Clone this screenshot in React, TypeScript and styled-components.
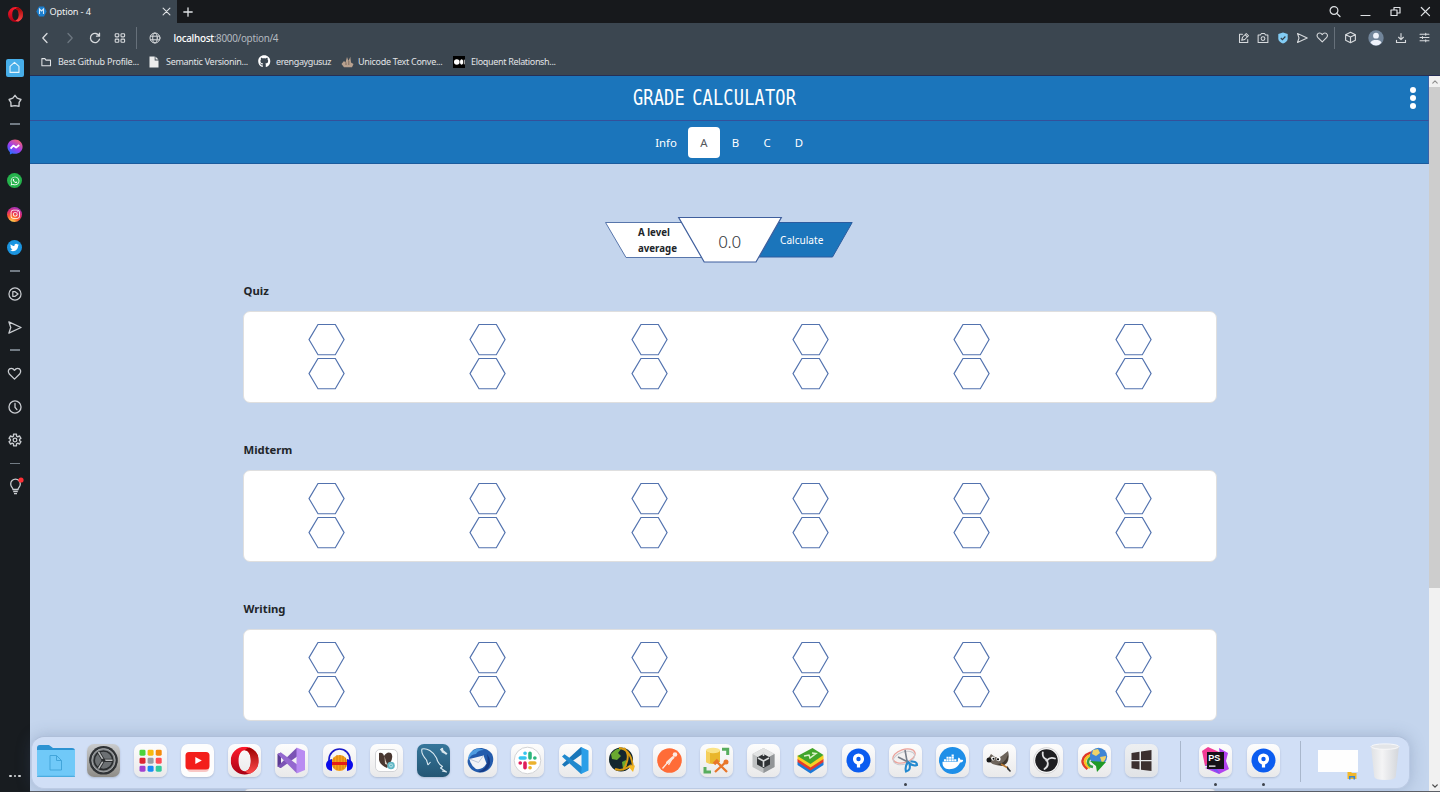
import React from "react";
import styled, { createGlobalStyle, css } from "styled-components";
import {
  FaFacebookMessenger,
  FaWhatsapp,
  FaInstagram,
  FaTwitter,
  FaGithub,
  FaDocker,
} from "react-icons/fa";

const Global = createGlobalStyle`
  * { box-sizing: border-box; }
  html, body { margin: 0; padding: 0; overflow: hidden; }
  body { font-family: "Noto Sans", "Open Sans", sans-serif; background: #181c20; }
  svg { display: block; }
`;

/* ---------- shell ---------- */

const Window = styled.div`
  position: relative;
  display: grid;
  grid-template-columns: 30px 1fr;
  width: 1440px;
  height: 792px;
  overflow: hidden;
`;

const Main = styled.div`
  display: flex;
  flex-direction: column;
  min-width: 0;
  height: 792px;
`;

/* ---------- opera sidebar ---------- */

const Sidebar = styled.aside`
  display: flex;
  flex-direction: column;
  align-items: center;
  height: 792px;
  background: #181c20;
  color: #c9ccd0;
`;

const SideLogo = styled.div`
  display: flex;
  align-items: center;
  justify-content: center;
  height: 50.7px;
  padding-bottom: 21px;
  flex: none;
`;

const SideItem = styled.div`
  display: flex;
  align-items: center;
  justify-content: center;
  width: 29.4px;
  height: 33.7px;
  flex: none;
`;

const SideDash = styled.div`
  width: 10px;
  height: 12px;
  flex: none;
  display: flex;
  align-items: center;
  &::after {
    content: "";
    width: 10px;
    height: 1.4px;
    background: #727b84;
  }
`;

const HomeTile = styled.div`
  display: flex;
  align-items: center;
  justify-content: center;
  width: 18px;
  height: 18px;
  border-radius: 2px;
  background: #47aee9;
`;

const Round = styled.div<{ $bg: string }>`
  display: flex;
  align-items: center;
  justify-content: center;
  width: 15px;
  height: 15px;
  border-radius: 50%;
  color: #fff;
  background: ${(p) => p.$bg};
`;

const SideMore = styled.div`
  display: flex;
  gap: 2px;
  margin-top: auto;
  margin-bottom: 15px;
  i {
    width: 2.5px;
    height: 2.5px;
    border-radius: 50%;
    background: #d5d7da;
  }
`;

/* ---------- browser chrome ---------- */

const TabBar = styled.div`
  display: flex;
  align-items: center;
  height: 23px;
  flex: none;
  background: #17191c;
  color: #dfe2e5;
`;

const Tab = styled.div`
  display: flex;
  align-items: center;
  width: 147px;
  height: 23px;
  padding: 0 6px 0 6px;
  background: #3b4650;
  font-size: 9.2px;
  letter-spacing: -0.15px;
`;

const TabTitle = styled.span`
  flex: 1;
  margin-left: 2.5px;
  color: #f1f3f5;
`;

const NewTab = styled.div`
  margin-left: 6px;
`;

const WindowButtons = styled.div`
  display: flex;
  align-items: center;
  gap: 19px;
  margin-left: auto;
  padding-right: 9px;
`;

const AddressBar = styled.div`
  display: flex;
  align-items: center;
  height: 29px;
  flex: none;
  padding-left: 8px;
  background: #3b4650;
  color: #d7dadd;
`;

const NavButtons = styled.div`
  display: flex;
  align-items: center;
  gap: 11px;
`;

const BarDivider = styled.div<{ $ml: number; $mr: number }>`
  width: 1px;
  height: 22px;
  margin-left: ${(p) => p.$ml}px;
  margin-right: ${(p) => p.$mr}px;
  background: #66707a;
`;

const Url = styled.div`
  margin-left: 13px;
  font-size: 9.9px;
  letter-spacing: -0.28px;
  color: #b4bac0;
  b {
    font-weight: 500;
    color: #ffffff;
  }
`;

const BarActions = styled.div`
  display: flex;
  align-items: center;
  margin-left: auto;
  padding-right: 9px;
`;

const PageActions = styled.div`
  display: flex;
  align-items: center;
  gap: 7.5px;
`;

const ProfileActions = styled.div`
  display: flex;
  align-items: center;
  gap: 11px;
`;

const Bookmarks = styled.div`
  display: flex;
  align-items: center;
  height: 24px;
  flex: none;
  padding: 0 0 4px 10px;
  border-bottom: 1px solid #262f55;
  background: #3b4650;
  color: #e2e4e7;
  font-size: 9px;
`;

const Bookmark = styled.div<{ $w: number; $gap: number; $ls: number }>`
  display: flex;
  align-items: center;
  width: ${(p) => p.$w}px;
  flex: none;
  gap: ${(p) => p.$gap}px;
  letter-spacing: ${(p) => p.$ls}px;
  white-space: nowrap;
`;

/* ---------- page ---------- */

const Viewport = styled.div`
  display: flex;
  flex: 1;
  min-height: 0;
  border-bottom: 1px solid #5c5f66;
`;

const Page = styled.div`
  flex: 1;
  min-width: 0;
  overflow: hidden;
  background: #c4d5ed;
`;

const Header = styled.header`
  display: grid;
  grid-template-columns: 1fr auto 1fr;
  align-items: center;
  height: 45px;
  border-bottom: 1px solid #34509a;
  border-right: 1px solid #3a62a8;
  background: #1b75bb;
`;

const Brand = styled.h1`
  grid-column: 2;
  margin: 0 29px 1px 0;
  color: #fff;
  font-family: "DejaVu Sans Mono", monospace;
  font-weight: 400;
  font-size: 17px;
  line-height: 20px;
  letter-spacing: 0.15px;
  word-spacing: -3px;
  transform: scaleY(1.2);
`;

const Kebab = styled.button`
  display: flex;
  flex-direction: column;
  align-items: center;
  gap: 1.8px;
  justify-self: end;
  margin: 0 12px 0 0;
  padding: 0;
  border: 0;
  background: none;
  i {
    width: 6.4px;
    height: 6.4px;
    border-radius: 50%;
    background: #fff;
  }
`;

const NavBar = styled.nav`
  display: flex;
  justify-content: center;
  align-items: center;
  height: 43px;
  border-bottom: 1px solid #1a5b9d;
  border-right: 1px solid #3a62a8;
  background: #1b75bb;
`;

const NavLink = styled.a<{ $active?: boolean; $w: number }>`
  display: flex;
  align-items: center;
  justify-content: center;
  width: ${(p) => p.$w}px;
  height: 31px;
  padding: 1px 0 0 1px;
  border-radius: 4px;
  font-size: 11.4px;
  color: #fff;
  ${(p) =>
    p.$active &&
    css`
      background: #fff;
      color: #55585c;
    `}
`;

const Content = styled.main`
  width: 974px;
  margin: 0 0 0 213px;
  padding-top: 53px;
`;

const Calc = styled.div`
  display: flex;
  align-items: center;
  height: 46px;
  margin-bottom: 18px;
  padding-left: 362px;
`;

const Shape = styled.div<{ $w: number; $h: number; $ml?: number; $z?: number }>`
  position: relative;
  z-index: ${(p) => p.$z ?? 0};
  display: flex;
  align-items: center;
  width: ${(p) => p.$w}px;
  height: ${(p) => p.$h}px;
  margin-left: ${(p) => p.$ml ?? 0}px;
  flex: none;
  > svg {
    position: absolute;
    inset: 0;
    z-index: -1;
    overflow: visible;
  }
`;

const AverageLabel = styled.span`
  margin-left: 33px;
  padding-top: 1px;
  font-weight: 700;
  font-size: 9.7px;
  line-height: 16px;
  color: #212529;
`;

const AverageValue = styled.span`
  width: 100%;
  padding: 3px 1px 0 0;
  text-align: center;
  font-size: 17px;
  font-weight: 300;
  letter-spacing: -0.3px;
  color: #33373b;
`;

const CalculateText = styled.span`
  margin-left: 23px;
  font-size: 10.1px;
  color: #fff;
`;

const Section = styled.section`
  height: 159px;
`;

const SectionTitle = styled.h2`
  margin: 0 0 10px 0.5px;
  padding-top: 1px;
  height: 20px;
  line-height: 18px;
  font-size: 11.3px;
  font-weight: 700;
  color: #212529;
`;

const Card = styled.div`
  display: flex;
  height: 92px;
  padding: 12px 2px 0 1.5px;
  border: 1px solid #dfdfdf;
  border-radius: 7px;
  background: #fff;
`;

const Column = styled.div`
  display: flex;
  flex-direction: column;
  align-items: center;
  gap: 2px;
  flex: 1;
`;

const Scrollbar = styled.div`
  display: flex;
  flex-direction: column;
  width: 11px;
  flex: none;
  background: #f1f1f1;
`;

const ScrollArrow = styled.div`
  display: flex;
  align-items: center;
  justify-content: center;
  height: 11px;
`;

const ScrollThumb = styled.div`
  height: 501px;
  margin-bottom: auto;
  background: #cdcdcd;
`;

/* ---------- dock ---------- */

const DockBar = styled.div`
  position: absolute;
  left: 31px;
  top: 736px;
  display: flex;
  width: 1379px;
  height: 53px;
  padding-left: 0.4px;
  border-radius: 13px;
  border: 1px solid #bccbe4;
  border-top-color: #afbfd9;
  background: #d1dff6;
  box-shadow: 0 0 16px rgba(70, 90, 130, 0.28);
`;

const DockCell = styled.div`
  display: flex;
  flex-direction: column;
  align-items: center;
  width: 47.2px;
  flex: none;
  padding-top: 7px;
`;

const Tile = styled.div<{ $bg?: string }>`
  width: 33px;
  height: 33px;
  border-radius: 7px;
  overflow: hidden;
  background: ${(p) => p.$bg ?? "linear-gradient(#fdfdfd, #e9e9ea)"};
  box-shadow: 0 1px 2px rgba(60, 70, 90, 0.22);
`;

const RunDot = styled.i`
  width: 3px;
  height: 3px;
  margin-top: 6px;
  border-radius: 50%;
  background: #3d434c;
`;

const DockRule = styled.div<{ $ml: number; $mr: number }>`
  width: 1px;
  height: 41px;
  margin: 4px ${(p) => p.$mr}px 0 ${(p) => p.$ml}px;
  background: #a9b7cc;
`;

const Thumb = styled.div`
  position: relative;
  width: 40px;
  height: 22px;
  margin: 13px 12px 0 0;
  background: #fefefe;
  svg {
    position: absolute;
    right: 1px;
    bottom: -8px;
  }
`;

const Trash = styled.div`
  margin-top: 6px;
`;

/* ---------- small line icons ---------- */

type IconProps = { w: number; h?: number; box?: string; sw?: number; color?: string; children: React.ReactNode };

const Line = ({ w, h, box = "0 0 16 16", sw = 1.4, color = "currentColor", children }: IconProps) => (
  <svg width={w} height={h ?? w} viewBox={box} fill="none" stroke={color} strokeWidth={sw} strokeLinecap="round" strokeLinejoin="round">
    {children}
  </svg>
);

const OperaMark = ({ size }: { size: number }) => (
  <svg width={size} height={size} viewBox="0 0 32 32">
    <defs>
      <linearGradient id="opl" x1="0" y1="0" x2="0" y2="1">
        <stop offset="0" stopColor="#ff1b2d" />
        <stop offset="1" stopColor="#a70014" />
      </linearGradient>
      <linearGradient id="opr" x1="0" y1="0" x2="0" y2="1">
        <stop offset="0" stopColor="#9c0000" />
        <stop offset="1" stopColor="#ff4b4b" />
      </linearGradient>
    </defs>
    <path fillRule="evenodd" fill="url(#opl)" d="M16 0a16 16 0 1 0 0 32a16 16 0 0 0 0-32ZM16 4c4.300 0 7 5 7 12s-2.700 12-7 12s-7-5-7-12s2.700-12 7-12Z" />
    <path fill="url(#opr)" d="M16 4q3-3 6-2.800A16 16 0 0 1 22 30.800Q19 31 16 28c4.300 0 7-5 7-12s-2.700-12-7-12Z" />
  </svg>
);

const Heart = () => <path d="M8 14 2.500 8.600C.3 6 1.600 2.500 4.600 2.500 6.300 2.500 7.300 3.500 8 4.600 8.700 3.500 9.700 2.500 11.400 2.500c3 0 4.300 3.500 2.100 6.100Z" />;
const Plane = () => <path d="M2 2 15 8 2 14 4 8Z" />;

const SidebarView = () => (
  <Sidebar>
    <SideLogo><OperaMark size={15} /></SideLogo>
    <SideItem>
      <HomeTile>
        <Line w={13} color="#e6f5fd" sw={1.300}><path d="M2.500 6.600 8 1.700l5.500 4.900V14h-11Z" /></Line>
      </HomeTile>
    </SideItem>
    <SideItem>
      <Line w={14} sw={1.600}><path d="M8 1.500 10.500 4.800 14.800 6.300 12.700 9.700 12.600 14 8 13.300 3.400 14 3.300 9.700 1.200 6.300 5.500 4.800Z" /></Line>
    </SideItem>
    <SideDash />
    <SideItem>
      <svg width="16" height="16" viewBox="0 0 16 16">
        <defs>
          <linearGradient id="ms" x1="0.200" y1="1" x2="0.800" y2="0">
            <stop offset="0" stopColor="#1778ff" />
            <stop offset=".45" stopColor="#9a3cf2" />
            <stop offset="1" stopColor="#ff6566" />
          </linearGradient>
        </defs>
        <path fill="url(#ms)" d="M8 .4C3.600.4.4 3.500.4 7.700c0 2.200 1 4.100 2.500 5.500v2.400l2.400-1.200c.9.200 1.700.4 2.700.4 4.400 0 7.600-3.100 7.600-7.100S12.400.4 8 .4Z" />
        <path fill="none" stroke="#fff" strokeWidth="1.800" strokeLinejoin="round" d="m3.600 9.600 2.700-3 2.800 2L12.200 6" />
      </svg>
    </SideItem>
    <SideItem><Round $bg="#25b34c"><FaWhatsapp size={10} /></Round></SideItem>
    <SideItem>
      <Round $bg="radial-gradient(circle at 30% 105%, #ffd050 8%, #fb5a2d 38%, #dc2c73 62%, #8a38d8 95%)"><FaInstagram size={10.500} /></Round>
    </SideItem>
    <SideItem><Round $bg="#1b95e0"><FaTwitter size={9} /></Round></SideItem>
    <SideDash />
    <SideItem><Line w={14} sw={1.400}><circle cx="8" cy="8" r="6.900" /><path d="M5.500 5.200h2.300L11.500 8 7.800 10.800H5.500Z" /></Line></SideItem>
    <SideItem><Line w={15} sw={1.400}><Plane /></Line></SideItem>
    <SideDash />
    <SideItem><Line w={15} sw={1.400}><Heart /></Line></SideItem>
    <SideItem><Line w={14} sw={1.500}><circle cx="8" cy="8" r="6.900" /><path d="M8 4v4.300L10.200 11" /></Line></SideItem>
    <SideItem>
      <Line w={14} sw={1.500}>
        <circle cx="8" cy="8" r="2.100" />
        <path d="M6.300 1.300h3.400v2.200l1.500.9 1.900-1.100 1.700 2.900-1.600 1v1.600l1.600 1-1.700 2.900-1.900-1.100-1.500.9v2.200H6.300v-2.200l-1.500-.9-1.900 1.100L1.200 9.800l1.600-1V7.200l-1.600-1 1.700-2.900 1.900 1.100 1.500-.9Z" />
      </Line>
    </SideItem>
    <SideDash />
    <SideItem>
      <svg width="18" height="18" viewBox="0 0 18 18" fill="none" stroke="currentColor" strokeWidth="1.300">
        <path d="M7 12.500C7 11 4.700 10 4.700 6.900a4.800 4.800 0 0 1 9.600 0c0 3.100-2.300 4.100-2.300 5.600ZM7.200 14.500h4.600M8 16.600h3" />
        <circle cx="15" cy="3" r="2.600" fill="#ff2f35" stroke="none" />
      </svg>
    </SideItem>
    <SideMore><i /><i /><i /></SideMore>
  </Sidebar>
);

const ChromeView = () => (
  <>
    <TabBar>
      <Tab>
        <svg width="11" height="11" viewBox="0 0 11 11">
          <path fill="#1b7fd0" d="M3 .5h5L10.700 5.500 8 10.500H3L.3 5.500Z" />
          <path fill="none" stroke="#d4e8f8" strokeWidth="1.100" d="M3.500 8V3l2 2 2-2v5" />
        </svg>
        <TabTitle>Option - 4</TabTitle>
        <Line w={9} box="0 0 10 10" sw={1.200}><path d="m1.200 1.200 7.600 7.600M8.800 1.200 1.200 8.800" /></Line>
      </Tab>
      <NewTab><Line w={10} box="0 0 10 10" sw={1.300}><path d="M5 .8v8.400M.8 5h8.400" /></Line></NewTab>
      <WindowButtons>
        <Line w={12} box="0 0 12 12" sw={1.200}><circle cx="5" cy="4.500" r="3.900" /><path d="m7.800 7.300 3.200 3.200" /></Line>
        <Line w={11} box="0 0 11 11" sw={1.200}><path d="M1 9.500h9" /></Line>
        <Line w={11} box="0 0 11 11" sw={1.200}><path d="M1 4h6v5.500H1ZM4 4V1.500h6V7H7" /></Line>
        <Line w={11} box="0 0 11 11" sw={1.200}><path d="m1.300 1.500 8.200 8.200M9.500 1.500 1.300 9.700" /></Line>
      </WindowButtons>
    </TabBar>
    <AddressBar>
      <NavButtons>
        <Line w={14} box="0 0 14 14" sw={1.300}><path d="M9 2.500 4.800 7 9 11.500" /></Line>
        <Line w={14} box="0 0 14 14" sw={1.300} color="#6d7780"><path d="m5 2.500 4.200 4.500L5 11.500" /></Line>
        <Line w={14} box="0 0 14 14" sw={1.300}><path d="M11.200 5A4.600 4.600 0 1 0 11.500 8.200M11.500 2.200v3H8.500" /></Line>
        <Line w={14} box="0 0 14 14" sw={1.100}>
          <rect x="2.200" y="2.700" width="3.600" height="3.200" rx=".8" /><rect x="8" y="2.700" width="3.600" height="3.200" rx=".8" />
          <rect x="2.200" y="8.100" width="3.600" height="3.200" rx=".8" /><rect x="8" y="8.100" width="3.600" height="3.200" rx=".8" />
        </Line>
      </NavButtons>
      <BarDivider $ml={9} $mr={11.500} />
      <Line w={12} box="0 0 12 12" sw={1}><circle cx="6" cy="6" r="5" /><ellipse cx="6" cy="6" rx="2.300" ry="5" /><path d="M1.500 4.200h9M1.500 7.800h9" /></Line>
      <Url><b>localhost</b>:8000/option/4</Url>
      <BarActions>
        <PageActions>
          <Line w={12} sw={1.400}><path d="M6 3H2v11h11v-4M5 11l1-4 5-5 3 3-5 5ZM9.500 3.500l3 3" /></Line>
          <Line w={12} sw={1.400}><path d="M1.500 4h3L6 2h4l1.500 2h3v10h-13Z" /><circle cx="8" cy="8.800" r="2.500" /></Line>
          <svg width="12" height="12" viewBox="0 0 12 12"><path fill="#83cdf5" d="M6 .5 10.700 2v4.500c0 2.500-2 4-4.700 5-2.700-1-4.700-2.500-4.700-5V2Z" /><path d="m3.800 6 1.600 1.600L8.400 4.500" fill="none" stroke="#32404b" strokeWidth="1.200" /></svg>
          <Line w={12} sw={1.400}><Plane /></Line>
          <Line w={12.500} sw={1.400}><Heart /></Line>
        </PageActions>
        <BarDivider $ml={6} $mr={9} />
        <ProfileActions>
          <Line w={13} sw={1.400}><path d="M8 1.500 14 4.500v7L8 14.500 2 11.500v-7ZM2 4.500l6 3 6-3M8 7.500v7" /></Line>
          <svg width="16" height="16" viewBox="0 0 16 16"><circle cx="8" cy="8" r="7.700" fill="#71859a" /><circle cx="8" cy="5.700" r="2.900" fill="#eef2fa" /><path fill="#eef2fa" d="M2.500 12.700C3.500 10.500 5.500 10 8 10s4.500.5 5.500 2.700A7.500 7.500 0 0 1 8 15.500a7.500 7.500 0 0 1-5.500-2.800Z" /></svg>
          <Line w={12} sw={1.500}><path d="M8 2v8M4.800 7 8 10.200 11.200 7M2 11v3h12v-3" /></Line>
          <Line w={13} sw={1.300}><path d="M2.500 4h11M2.500 8h11M2.500 12h11M9.500 2.800v2.400M5.500 6.800v2.400M9.500 10.800v2.400" /></Line>
        </ProfileActions>
      </BarActions>
    </AddressBar>
    <Bookmarks>
      <Bookmark $w={108.500} $gap={6} $ls={-0.250}>
        <Line w={12} sw={1.400}><path d="M2.500 3.500h4l1.500 2h6v7.500h-11.500Z" /></Line>Best Github Profile...
      </Bookmark>
      <Bookmark $w={109.500} $gap={7.500} $ls={-0.290}>
        <svg width="10" height="12" viewBox="0 0 10 12"><path fill="#eceded" d="M.5.5h5.200v4h3.800v7H.5ZM6.500.5l3 3h-3Z" /></svg>Semantic Versionin...
      </Bookmark>
      <Bookmark $w={82.500} $gap={5.500} $ls={-0.380}><FaGithub size={12.500} color="#fff" />erengaygusuz</Bookmark>
      <Bookmark $w={112.500} $gap={4.500} $ls={-0.290}>
        <svg width="13" height="12" viewBox="0 0 13 12"><path fill="#b8a18f" d="M.5 8 3 5l1.500 1.500L6 1l1.500 4L9.300.8l.7 5.700 2.500 1.500L11 11.300H3Z" /><path stroke="#625248" strokeWidth=".7" d="M5 6.500v2.500M7.800 5v4" /></svg>Unicode Text Conve...
      </Bookmark>
      <Bookmark $w={110} $gap={6} $ls={-0.330}>
        <svg width="12" height="12" viewBox="0 0 12 12"><path d="M0 0h12v12H0Z" /><circle cx="3.800" cy="6" r="2.800" fill="#fff" /><ellipse cx="8.600" cy="6" rx="1.600" ry="2.700" fill="#fff" /><path stroke="#fff" strokeWidth=".8" d="M11.300 3.700v4.600" /></svg>Eloquent Relationsh...
      </Bookmark>
    </Bookmarks>
  </>
);

/* ---------- grade calculator ---------- */

const Hexagon = () => (
  <svg width="37" height="32" viewBox="0 0.400 37 32">
    <path d="M10 .9h17.300L36.100 16 27.300 31.100H10L1 16Z" fill="#fff" stroke="#5272ae" strokeWidth="1.150" />
  </svg>
);

const ScoreCard = () => (
  <Card>
    {[0, 1, 2, 3, 4, 5].map((i) => (
      <Column key={i}><Hexagon /><Hexagon /></Column>
    ))}
  </Card>
);

const PageView = () => (
  <Page>
    <Header>
      <Brand>GRADE CALCULATOR</Brand>
      <Kebab aria-label="Menu"><i /><i /><i /></Kebab>
    </Header>
    <NavBar>
      <NavLink $w={44}>Info</NavLink>
      <NavLink $w={32} $active>A</NavLink>
      <NavLink $w={31}>B</NavLink>
      <NavLink $w={32}>C</NavLink>
      <NavLink $w={32}>D</NavLink>
    </NavBar>
    <Content>
      <Calc>
        <Shape $w={100} $h={36}>
          <svg width="100" height="36"><path d="M.5.5H99V35.500H21Z" fill="#fff" stroke="#5876ab" /></svg>
          <AverageLabel>A level<br />average</AverageLabel>
        </Shape>
        <Shape $w={104} $h={46} $ml={-27} $z={2}>
          <svg width="104" height="46"><path d="M.7.500H103.300L78 45H26.200Z" fill="#fff" stroke="#3f5f9d" strokeWidth="1.200" /></svg>
          <AverageValue>0.0</AverageValue>
        </Shape>
        <Shape $w={96} $h={36} $ml={-25} $z={1}>
          <svg width="96" height="36"><path d="M1 .5H95.200L75.500 35H1Z" fill="#1b75bb" stroke="#2c5c9f" /></svg>
          <CalculateText>Calculate</CalculateText>
        </Shape>
      </Calc>
      {["Quiz", "Midterm", "Writing"].map((t) => (
        <Section key={t}>
          <SectionTitle>{t}</SectionTitle>
          <ScoreCard />
        </Section>
      ))}
      <Section>
        <SectionTitle />
        <ScoreCard />
      </Section>
    </Content>
  </Page>
);

/* ---------- dock icons, drawn on a 33px square ---------- */

const Art = ({ children }: { children: React.ReactNode }) => (
  <svg width="33" height="33" viewBox="0 0 33 33">{children}</svg>
);

const Folder = () => (
  <svg width="40" height="34" viewBox="0 0 40 34">
    <path fill="#2d93d2" d="M1 4q0-3 3-3h9l4 3h19q3 0 3 3v6H1Z" />
    <path fill="#70c9f8" d="M1 6h38v24q0 3-3 3H4q-3 0-3-3Z" />
    <path fill="none" stroke="#42a5da" d="M14 11.500h6.500l5 5V26H14ZM20.500 11.500v5h5M1 32.300h38" />
  </svg>
);

const Sourcetree = () => (
  <Art>
    <circle cx="16.500" cy="16.500" r="12" fill="#0b5cf0" />
    <circle cx="16.500" cy="15" r="3.900" fill="none" stroke="#fff" strokeWidth="3.400" />
    <path stroke="#fff" strokeWidth="3.200" d="M16.500 19v4.500" />
  </Art>
);

const colors = ["#4bd33b", "#f6b90e", "#f58a0a", "#dd2631", "#989da6", "#ff4b54", "#a240d0", "#178cf4", "#34ca9c"];

type App = { id: string; bg?: string; run?: boolean; art: React.ReactNode };

const apps: App[] = [
  {
    id: "settings",
    bg: "linear-gradient(#c9cbcd, #8e8c87)",
    art: (
      <Art>
        <circle cx="16.500" cy="16.300" r="14.300" fill="#2f3235" />
        <circle cx="16.500" cy="16.300" r="11.700" fill="#808487" stroke="#a9abad" strokeWidth=".9" />
        <circle cx="16.500" cy="16.300" r="9.300" fill="#6c7073" stroke="#2a2d2f" strokeWidth="1.700" />
        <path d="M16.500 16.300 11.500 8M16.500 16.300h9M16.500 16.300 11.500 24.600" fill="none" stroke="#2a2d2f" strokeWidth="3.200" />
        <path d="M16.500 16.300 11.500 8M16.500 16.300h9M16.500 16.300 11.500 24.600" fill="none" stroke="#b9bbbc" strokeWidth="1.500" />
        <circle cx="16.500" cy="16.300" r="1.800" fill="#2b2e30" />
      </Art>
    ),
  },
  {
    id: "launchpad",
    art: <Art>{colors.map((c, i) => <rect key={c} x={5.500 + (i % 3) * 8.100} y={5.700 + Math.floor(i / 3) * 8} width="6" height="6" rx="1.400" fill={c} />)}</Art>,
  },
  {
    id: "youtube",
    bg: "#fdfdfd",
    art: <Art><rect x="6" y="11" width="22" height="17" rx="4" fill="#f6a4a0" opacity=".6" /><rect x="4.500" y="8" width="24" height="17.500" rx="3.500" fill="#f31e1b" /><path fill="#fff" d="m14.300 13 6.500 3.500L14.300 20Z" /></Art>,
  },
  { id: "opera", art: <Art><g transform="translate(2.700 2.700)"><OperaMark size={28} /></g></Art> },
  {
    id: "visual-studio",
    art: (
      <Art>
        <path fill="#5b3b92" d="M2.500 10 6 8.500v15.500l-3.500-1.500Z" />
        <path fill="#7b53b5" d="m2.500 22.500 3.500 1.500L23.500 11.500V5.500L21.500 4Z" />
        <path fill="#9468cf" d="M2.500 10 6 8.500l17.500 13v6L21.500 29Z" />
        <path fill="#b98cf2" d="m21.500 3.500 8.500 3.500v19l-8.500 3.500Z" />
      </Art>
    ),
  },
  {
    id: "audacity",
    art: (
      <Art>
        <circle cx="16.500" cy="19" r="8" fill="#f7a11a" />
        <path fill="none" stroke="#c9720c" strokeWidth=".7" d="M11 14v10M14 11v15M17 11v15M20 12v13M22.500 14v9" />
        <path stroke="#e71c16" strokeWidth="3" d="M9 19.500h15" />
        <path fill="none" stroke="#1a1ac8" strokeWidth="1.700" d="M6 18V15.500a10.500 10.500 0 0 1 21 0V18" />
        <path fill="#0b0bea" d="M9 15v12Q3 26 3 21t6-6ZM24 15v12q6-1 6-6t-6-6Z" />
      </Art>
    ),
  },
  {
    id: "dbeaver",
    art: (
      <Art>
        <rect x="5.500" y="5.500" width="22" height="22" rx="4.500" fill="#fff" stroke="#d2d3d6" />
        <path fill="#493730" d="M9 9q4-1 5 3 3-5 7-3 3 4-1 10l-3 5q-7-3-8-8Z" />
        <path fill="#d8ccc3" d="M14.500 12q1.500 7 3.500 9l-3-1Z" />
        <circle cx="21" cy="21.500" r="3.800" fill="#62b7c5" /><circle cx="21" cy="21.500" r="1.500" fill="none" stroke="#d9f2f4" strokeWidth=".7" />
      </Art>
    ),
  },
  {
    id: "mysql",
    bg: "linear-gradient(#36769b, #245674)",
    art: (
      <Art>
        <path fill="none" stroke="#d9e8f0" strokeWidth="1.100" strokeLinejoin="round" d="M11 21 9.500 16C6 12 4 8 5 5c5-1 11 2 14.500 9 1 4 3 7 6 8.500l-2 1.500 6 4-4.500-1M11 21l2.500-3" />
        <path fill="none" stroke="#d8e6ed" strokeWidth="2" d="m25 4 .5 3.500L30 10M23.500 5l6 5" />
      </Art>
    ),
  },
  {
    id: "thunderbird",
    art: (
      <Art>
        <path fill="#245cad" d="M9 6C15 2 24 4 28 10c4 8-2 18-11 18.500C8 29 2 21 4 15q2-5 5-9Z" />
        <path fill="#4f9ce0" d="M7 8q7-6 13-2-6 0-8 4Q7 10 4 16q0-5 3-8Z" />
        <path fill="#163a84" d="M23 10q5 6 2 13-4 6-11 5 12-4 9-18Z" />
        <path fill="#f2f3f7" d="m5.500 15 14-3.500 3 8Q19 26 12 25Q7 22 5.500 15Z" /><path fill="none" stroke="#bcc6db" d="m5.500 15 9 3.500 5-7" />
      </Art>
    ),
  },
  {
    id: "slack",
    art: (
      <Art>
        <circle cx="16.500" cy="16.500" r="13.300" fill="#fff" stroke="#d1d2d4" />
        <g strokeWidth="3.600" strokeLinecap="round" fill="none">
          <path stroke="#36c5f0" d="M14 9.200h.1M9.300 14H14" /><path stroke="#2eb67d" d="M19 9.200V14M23.800 14h.1" />
          <path stroke="#e01e5a" d="M14 23.800V19M9.200 19h.1" /><path stroke="#ecb22e" d="M19 23.800h.1M19 19h4.800" />
        </g>
      </Art>
    ),
  },
  {
    id: "vscode",
    art: (
      <Art>
        <path fill="#1976b9" d="m3 20.500 2.500 2.300L24 9.500v-5L22 3Z" />
        <path fill="#2089ce" d="m3 12.500 2.500-2.300L24 23.500v5L22 30Z" />
        <path fill="#2b9fe8" d="m22 3 7.500 3.500v20L22 30l.5-4.500v-18Z" />
      </Art>
    ),
  },
  {
    id: "globe-arrow",
    art: (
      <Art>
        <circle cx="15" cy="15.500" r="12" fill="#13272e" />
        <path fill="#69a930" d="M5 10q5-6 10-5l-3 4 3 3-4 4-5-1ZM16 18l4-2 1 6-4 3Z" />
        <path fill="none" stroke="#d89b13" strokeWidth="1.900" d="M13 4Q25 5 27 23M18 4Q26 12 17 26M9 25q8 3 16-4" />
        <path fill="#f4b823" d="m22 22 7-.5-2 6.500Z" />
      </Art>
    ),
  },
  {
    id: "postman",
    art: (
      <Art>
        <circle cx="16.500" cy="16.500" r="12.300" fill="#ff6c37" />
        <circle cx="22" cy="10.500" r="2.300" fill="#fde9e1" />
        <path fill="none" stroke="#fbe6dc" strokeWidth="2.800" strokeLinecap="round" d="m20 13.500-5.500 5" />
        <path fill="none" stroke="#fbe6dc" strokeWidth="1.300" d="m15 18-5.500 6.500M18.500 16l-3 5" />
      </Art>
    ),
  },
  {
    id: "db-tools",
    art: (
      <Art>
        <path fill="#e9b62b" d="M6 6v12q7 4 14 0V6Z" /><ellipse cx="13" cy="6.500" rx="7" ry="2.700" fill="#fae387" /><path fill="#f5cf5a" d="M6 7v11q2 1.500 4 1.800V9Z" />
        <path fill="none" stroke="#58ad5e" strokeWidth="3" d="M22 5.300h5.700V11M5 23v5h6" />
        <path stroke="#e8762a" strokeWidth="2.300" d="m15 28 12-11M16 17l11 11" /><path stroke="#e8762a" strokeWidth="3.300" d="m14 20 4-4" /><circle cx="26" cy="18" r="2.500" fill="#e8762a" />
      </Art>
    ),
  },
  {
    id: "unity",
    art: (
      <Art>
        <path fill="#bfc1c2" d="m16.500 4 11 6v13l-11 6-11-6V10Z" /><path fill="#e2e3e3" d="m5.500 10 11-6 11 6-11 6Z" /><path fill="#929597" d="M16.500 16v13l11-6V10Z" />
        <path fill="#2e3133" d="m16.500 10 6.500 3.500v7L16.500 24 10 20.500v-7Z" /><path fill="none" stroke="#d7d9d9" strokeWidth="1.600" d="M16.500 17v6M16.500 17 11 14M16.500 17l5.500-3M16.500 8v4" />
      </Art>
    ),
  },
  {
    id: "bluestacks",
    art: (
      <Art>
        <path fill="#1d79d8" d="m3.500 21 13 8.500 13-8.500v-3h-26Z" /><path fill="#e43b2c" d="m3.500 18 13 8.500L29.500 18v-3h-26Z" /><path fill="#f6cf23" d="m3.500 15 13 8.500L29.500 15v-3.500h-26Z" />
        <path fill="#42a52b" d="m3.500 12 15-8 11 7-13 9Z" /><path fill="none" stroke="#dbf2c8" strokeWidth="1.500" d="m10 12 5-1 1 3 6-4.500-4-.5" />
      </Art>
    ),
  },
  { id: "sourcetree", art: <Sourcetree /> },
  {
    id: "snipping",
    run: true,
    art: (
      <Art>
        <ellipse cx="15" cy="12" rx="11.500" ry="6.500" fill="#f3f1f1" stroke="#eba29b" strokeWidth="1.300" transform="rotate(-18 15 12)" />
        <ellipse cx="15" cy="14" rx="11" ry="6" fill="none" stroke="#c8c9ce" transform="rotate(-18 15 14)" />
        <path stroke="#777e89" strokeWidth="1.600" d="m16 6 2.500 14M9 13l12 6" />
        <path fill="none" stroke="#2389cf" strokeWidth="2.100" d="M18.700 18.500q-3 4-1.700 9 5.500-1 3.200-8.500 3.800 3.500 7.800 2 0-4-6.500-3.500" />
      </Art>
    ),
  },
  { id: "docker", art: <Art><circle cx="16.500" cy="16.500" r="13.500" fill="#1f8fe8" /><g transform="translate(6.300 7.300)"><FaDocker size={21} color="#fff" /></g></Art> },
  {
    id: "gimp",
    art: (
      <Art>
        <path fill="#6d645b" d="M5 15 8 10l4 3q5 1 8-2l5-4q2 7-1 12-4 4-11 2-6-1-8-6Z" /><path fill="#40382f" d="M14 20q8 0 11-9 1 9-6 11Z" />
        <circle cx="10" cy="14.500" r="2" fill="#fff" /><circle cx="15.500" cy="15" r="2.200" fill="#fff" /><circle cx="10.500" cy="14.800" r="1" /><circle cx="15" cy="15.300" r="1.100" /><circle cx="6" cy="16" r="2.500" fill="#171717" />
        <path stroke="#b77832" strokeWidth="1.500" d="m18 20 7 4" /><path fill="#333" d="m24 22 4 5-1 1-3-3Z" />
      </Art>
    ),
  },
  {
    id: "obs",
    art: (
      <Art>
        <circle cx="16.500" cy="16.500" r="13.200" fill="#d3d3d5" /><circle cx="16.500" cy="16.500" r="12.200" fill="#fff" /><circle cx="16.500" cy="16.500" r="11.300" fill="#1f1f22" />
        <path fill="none" stroke="#dedee0" strokeWidth="1.800" strokeLinecap="round" d="M12.800 8.500Q12 14 17 15.500M25 14.500Q20 12.500 17 16.500M14.500 25Q19.500 22 17 16.500" />
        <circle cx="16.700" cy="16.200" r="1.300" fill="#dedee0" />
      </Art>
    ),
  },
  {
    id: "idm",
    art: (
      <Art>
        <path fill="none" stroke="#df382b" strokeWidth="2.500" d="M17 8Q6 9 4.500 17q0 4 5 8" /><path fill="none" stroke="#f7c322" strokeWidth="2.500" d="M18 10Q8 11 7 17q0 4 5 7" /><path fill="none" stroke="#359f48" strokeWidth="2.500" d="M18 13q-8 0-8 5 0 4 5 5" />
        <circle cx="20.500" cy="12.500" r="8.700" fill="#3f85d4" /><path fill="#f0d267" d="m15 6 5-1 2 4-4 3-4-2ZM22 13l6-1q0 4-4 7Z" />
        <path fill="#1f9a26" d="m12 17 16 1-9 10-1-6Z" />
      </Art>
    ),
  },
  { id: "windows", bg: "linear-gradient(#edeff1, #e1e3e6)", art: <Art><path fill="#3c302f" d="m6.500 9 8-1.200v8.200h-8ZM16 7.500l10.500-1.500v10H16ZM6.500 17.300h8v8.200l-8-1.300ZM16 17.300h10.500V27L16 25.700Z" /></Art> },
];

const PhpStorm = () => (
  <Art>
    <path fill="#f03c97" d="m3 7 6-4 11 5-3 14L6 22Z" /><path fill="#b242ef" d="m20 4 9 5-2 8 3 8-10 5L6 24l16-6Z" /><path fill="#7556f0" d="m6 21 8-2 7 11Z" />
    <rect x="8" y="8" width="17" height="17" fill="#151117" />
    <text x="9.300" y="17" fill="#fff" fontFamily="Liberation Sans, sans-serif" fontWeight="700" fontSize="9">PS</text>
    <path fill="#fff" d="M10 21.500h6.500v1.300H10Z" />
  </Art>
);

const DockView = () => (
  <DockBar>
    <DockCell><Folder /></DockCell>
    {apps.map((a) => (
      <DockCell key={a.id}>
        <Tile $bg={a.bg}>{a.art}</Tile>
        {a.run && <RunDot />}
      </DockCell>
    ))}
    <DockRule $ml={15} $mr={11.400} />
    <DockCell><Tile><PhpStorm /></Tile><RunDot /></DockCell>
    <DockCell><Tile><Sourcetree /></Tile><RunDot /></DockCell>
    <DockRule $ml={13.400} $mr={16.600} />
    <Thumb>
      <svg width="10" height="9" viewBox="0 0 10 9"><path fill="#f2b72c" d="M.5 1h3.500l1 1h4.500v6h-9Z" /><path fill="#3c87cf" d="M2 5h6v3.500H6.500v-2h-3v2H2Z" /></svg>
    </Thumb>
    <Trash>
      <svg width="30" height="38" viewBox="0 0 30 39">
        <defs><linearGradient id="bin" x1="0" x2="1"><stop offset="0" stopColor="#dfe1e4" /><stop offset=".4" stopColor="#f4f4f5" /><stop offset="1" stopColor="#d3d6db" /></linearGradient></defs>
        <path fill="url(#bin)" d="M.7 3.500 4 35q1 3 11 3t11-3L29.300 3.500Z" /><ellipse cx="15" cy="3.700" rx="14.300" ry="2.800" fill="#e3e5e8" stroke="#f8f8f9" />
      </svg>
    </Trash>
  </DockBar>
);

export default function App() {
  return (
    <>
      <Global />
      <Window>
        <SidebarView />
        <Main>
          <ChromeView />
          <Viewport>
            <PageView />
            <Scrollbar>
              <ScrollArrow><Line w={6} box="0 0 8 8" color="#8d8d8d"><path d="m1 5.500 3-3 3 3" /></Line></ScrollArrow>
              <ScrollThumb />
              <ScrollArrow><Line w={6} box="0 0 8 8" color="#4d4d4d" sw={1.800}><path d="m1 2.500 3 3 3-3" /></Line></ScrollArrow>
            </Scrollbar>
          </Viewport>
        </Main>
        <DockView />
      </Window>
    </>
  );
}
